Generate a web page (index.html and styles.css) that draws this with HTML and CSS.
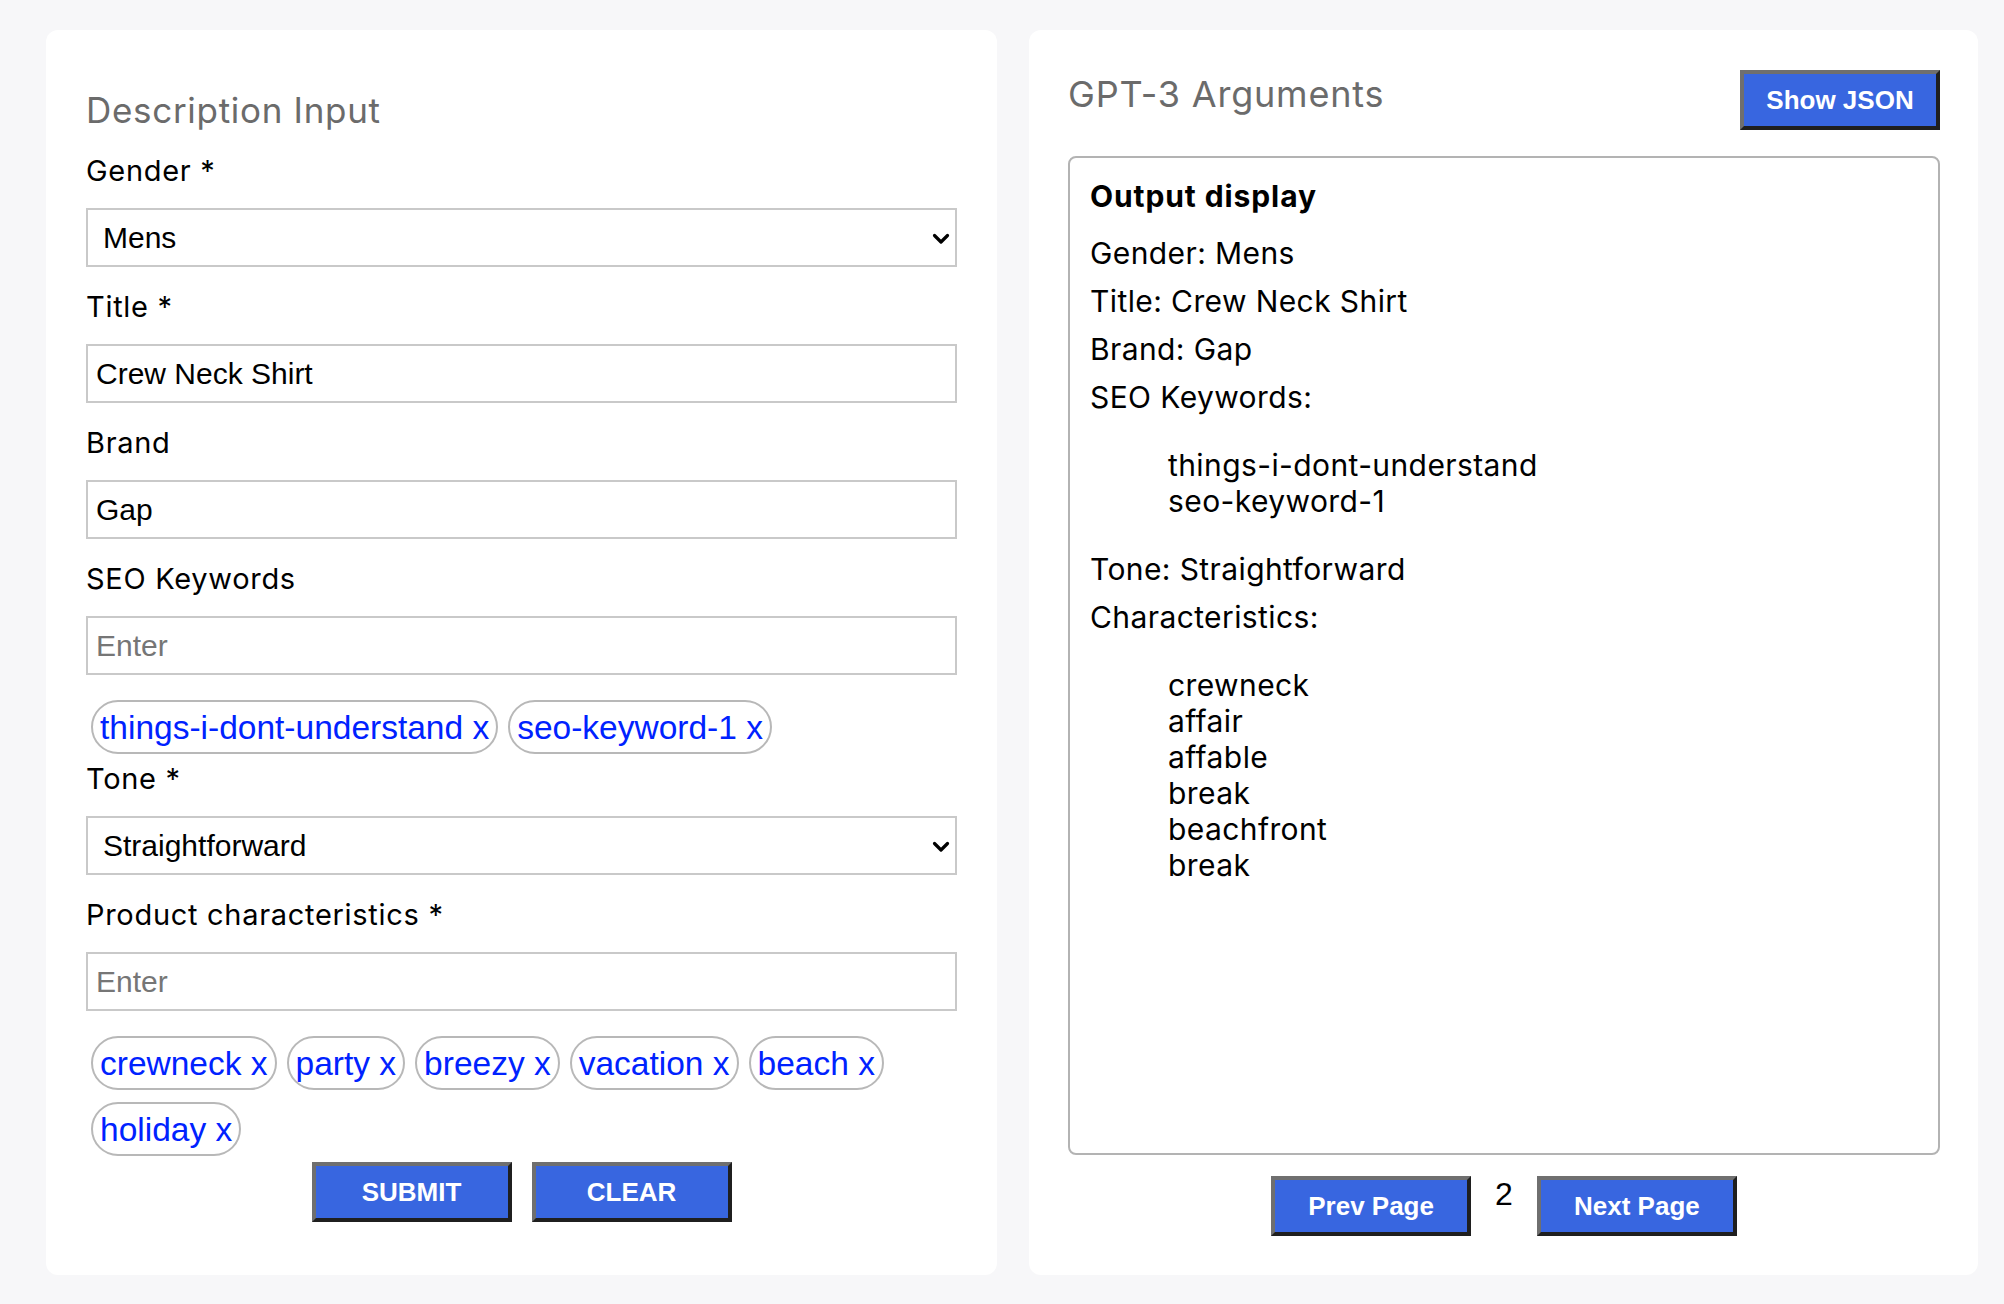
FILE: index.html
```html
<!DOCTYPE html>
<html lang="en">
<head>
<meta charset="utf-8">
<title>Description Input</title>
<link rel="stylesheet" href="styles.css">
</head>
<body>
<main class="page">
  <section class="card card-input">
    <h2 class="card-title">Description Input</h2>

    <label class="field-label">Gender *</label>
    <div class="select-wrap">
      <select class="field-select"><option>Mens</option></select>
      <svg class="chevron" width="18" height="12" viewBox="0 0 18 12"><polyline points="2.5,2.5 9,9 15.5,2.5" fill="none" stroke="#000" stroke-width="3.2" stroke-linecap="round" stroke-linejoin="round"/></svg>
    </div>

    <label class="field-label">Title *</label>
    <input class="field-input" type="text" value="Crew Neck Shirt">

    <label class="field-label">Brand</label>
    <input class="field-input" type="text" value="Gap">

    <label class="field-label">SEO Keywords</label>
    <input class="field-input" type="text" placeholder="Enter">

    <div class="tags">
      <span class="tag">things-i-dont-understand x</span>
      <span class="tag">seo-keyword-1 x</span>
    </div>

    <label class="field-label">Tone *</label>
    <div class="select-wrap">
      <select class="field-select"><option>Straightforward</option></select>
      <svg class="chevron" width="18" height="12" viewBox="0 0 18 12"><polyline points="2.5,2.5 9,9 15.5,2.5" fill="none" stroke="#000" stroke-width="3.2" stroke-linecap="round" stroke-linejoin="round"/></svg>
    </div>

    <label class="field-label">Product characteristics *</label>
    <input class="field-input" type="text" placeholder="Enter">

    <div class="tags">
      <span class="tag">crewneck x</span>
      <span class="tag">party x</span>
      <span class="tag">breezy x</span>
      <span class="tag">vacation x</span>
      <span class="tag">beach x</span>
      <span class="tag">holiday x</span>
    </div>

    <div class="actions">
      <button class="btn">SUBMIT</button>
      <button class="btn">CLEAR</button>
    </div>
  </section>

  <section class="card card-output">
    <div class="output-header">
      <h2 class="card-title card-title-output">GPT-3 Arguments</h2>
      <button class="btn btn-json">Show JSON</button>
    </div>

    <div class="output-box">
      <h3 class="output-title">Output display</h3>
      <p class="output-line">Gender: Mens</p>
      <p class="output-line">Title: Crew Neck Shirt</p>
      <p class="output-line">Brand: Gap</p>
      <p class="output-line">SEO Keywords:</p>
      <ul class="output-list">
        <li>things-i-dont-understand</li>
        <li>seo-keyword-1</li>
      </ul>
      <p class="output-line">Tone: Straightforward</p>
      <p class="output-line">Characteristics:</p>
      <ul class="output-list">
        <li>crewneck</li>
        <li>affair</li>
        <li>affable</li>
        <li>break</li>
        <li>beachfront</li>
        <li>break</li>
      </ul>
    </div>

    <div class="pager">
      <button class="btn">Prev Page</button>
      <span class="page-num">2</span>
      <button class="btn">Next Page</button>
    </div>
  </section>
</main>
</body>
</html>
```

FILE: styles.css
```css
* {
  box-sizing: border-box;
}

html, body {
  margin: 0;
  padding: 0;
}

body {
  background: #f7f7f9;
  font-family: "Inter", "Liberation Sans", sans-serif;
  color: #000;
}

.page {
  display: grid;
  grid-template-columns: 951px 949px;
  column-gap: 32px;
  padding: 30px 26px 29px 46px;
  align-items: stretch;
}

.card {
  background: #ffffff;
  border-radius: 12px;
}

.card-input {
  padding: 59px 40px 53px 40px;
}

.card-title {
  margin: 0;
  font-family: "Inter", sans-serif;
  font-weight: 400;
  font-size: 35px;
  letter-spacing: 0.7px;
  line-height: 42px;
  color: #6b6b6b;
}

.card-title-output {
  margin-top: 7px;
  font-size: 36px;
  letter-spacing: 0.8px;
}

.field-label {
  display: block;
  margin: 23px 0 20px 0;
  font-family: "Inter", sans-serif;
  font-size: 29px;
  letter-spacing: 0.7px;
  line-height: 34px;
  color: #000;
}

.tags + .field-label {
  margin-top: 2px;
}

.field-input,
.field-select {
  display: block;
  width: 100%;
  height: 59px;
  margin: 0;
  border: 2px solid #c9c9c9;
  border-radius: 0;
  background: #fff;
  font-family: "Liberation Sans", Arial, sans-serif;
  font-size: 30px;
  color: #000;
  outline: none;
}

.field-input {
  padding: 0 8px;
}

.field-input::placeholder {
  color: #767676;
}

.select-wrap {
  position: relative;
}

.field-select {
  appearance: none;
  -webkit-appearance: none;
  padding: 0 40px 0 15px;
}

.chevron {
  position: absolute;
  right: 7px;
  top: 50%;
  margin-top: -4.5px;
  pointer-events: none;
}

.tags {
  display: flex;
  flex-wrap: wrap;
  padding-top: 19px;
}

.tag {
  margin: 6px 5px;
  padding: 0 7px;
  height: 54px;
  border: 2px solid #b8b8b8;
  border-radius: 27px;
  font-family: "Liberation Sans", Arial, sans-serif;
  font-size: 33.5px;
  line-height: 52px;
  color: #0022ff;
  white-space: nowrap;
}

.actions {
  display: flex;
  justify-content: center;
  gap: 20px;
}

.btn {
  width: 200px;
  height: 60px;
  margin: 0;
  padding: 0;
  background: #3866e0;
  border-style: solid;
  border-width: 4px;
  border-color: #6f6f6f #1f1f1f #1f1f1f #6f6f6f;
  border-radius: 0;
  color: #fff;
  font-family: "Liberation Sans", Arial, sans-serif;
  font-weight: 700;
  font-size: 26px;
  cursor: pointer;
}

.card-output {
  display: flex;
  flex-direction: column;
  padding: 36px 38px 39px 39px;
}

.output-header {
  display: flex;
  justify-content: space-between;
  align-items: flex-start;
  height: 64px;
}

.btn-json {
  margin-top: 4px;
}

.output-box {
  flex: 1;
  margin-top: 26px;
  border: 2px solid #b3b3b3;
  border-radius: 8px;
  padding: 20px 20px;
}

.output-title {
  margin: 0 0 21px 0;
  font-family: "Inter", sans-serif;
  font-weight: 700;
  font-size: 30px;
  letter-spacing: 0.9px;
  line-height: 36px;
}

.output-line {
  margin: 12px 0;
  font-size: 30px;
  letter-spacing: 0.4px;
  line-height: 36px;
}

.output-list {
  list-style: none;
  margin: 32px 0;
  padding: 0 0 0 78px;
  font-size: 30px;
  letter-spacing: 0.4px;
  line-height: 36px;
}

.pager {
  display: flex;
  justify-content: center;
  align-items: flex-start;
  margin-top: 21px;
}

.page-num {
  margin: 0 24px;
  font-family: "Liberation Sans", Arial, sans-serif;
  font-size: 32px;
}
```
